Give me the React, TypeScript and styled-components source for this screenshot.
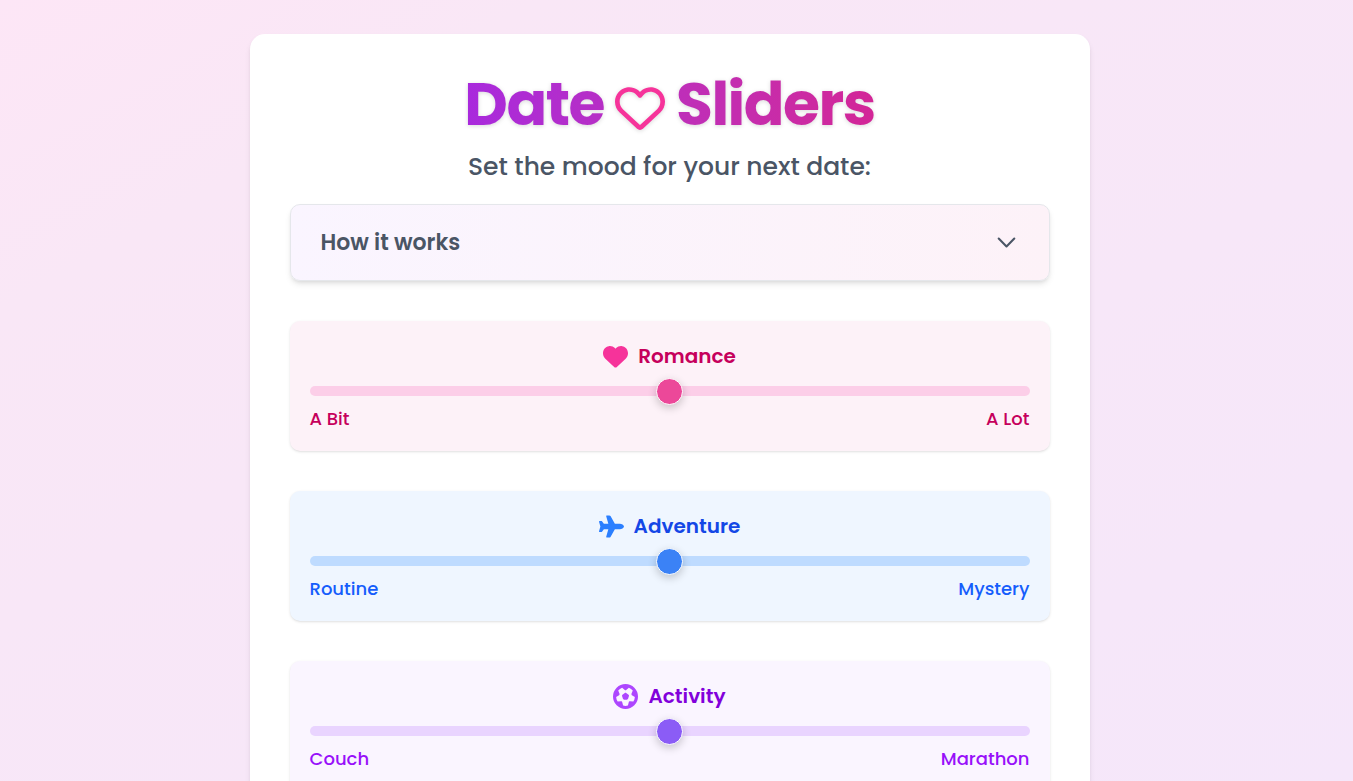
import React, { useState } from "react";
import styled, { createGlobalStyle } from "styled-components";
import { FaFutbol, FaHeart, FaPlane, FaRegHeart } from "react-icons/fa6";

const GlobalStyle = createGlobalStyle`
  *, *::before, *::after { box-sizing: border-box; }
  body {
    margin: 0;
    font-family: Poppins, Inter, "Noto Sans", sans-serif;
    color: #4a5565;
  }
`;

const Page = styled.div`
  min-height: 100vh;
  padding: 34px 34px 40px 20px;
  background: linear-gradient(to bottom right, #fde6f6, #f9e7f6 20%, #f5e7fa) fixed;
`;

const Panel = styled.main`
  max-width: 840px;
  margin: 0 auto;
  padding: 40px;
  background: #fff;
  border-radius: 15px;
  box-shadow: 0 4px 6px -1px rgba(0, 0, 0, 0.1), 0 2px 4px -2px rgba(0, 0, 0, 0.1);
`;

const Title = styled.h1`
  display: flex;
  align-items: center;
  justify-content: center;
  gap: 11px;
  margin: 0;
  font-size: 60px;
  line-height: 60px;
  font-weight: 700;
  letter-spacing: -0.025em;
  color: transparent;
  background: linear-gradient(to right in oklab, #9810fa, #e60076);
  background-clip: text;
  -webkit-background-clip: text;
  filter: drop-shadow(0 1px 2px rgba(0, 0, 0, 0.15));

  svg {
    width: 50px;
    height: 50px;
    margin-top: 8px;
    color: #f6339a;
  }
`;

const Subtitle = styled.p`
  margin: 15px 0 20px;
  font-size: 25px;
  line-height: 35px;
  font-weight: 500;
  text-align: center;
`;

const Disclosure = styled.button`
  display: flex;
  align-items: center;
  justify-content: space-between;
  width: 100%;
  padding: 20px 30px;
  border: 1px solid #e5e7eb;
  border-radius: 10px;
  background: linear-gradient(to right, #faf5ff, #fdf2f8);
  box-shadow: 0 4px 6px -1px rgba(0, 0, 0, 0.1), 0 2px 4px -2px rgba(0, 0, 0, 0.1);
  color: inherit;
  font: inherit;
  font-size: 22px;
  line-height: 35px;
  font-weight: 600;
  cursor: pointer;
`;

const Chevron = styled.svg`
  width: 25px;
  height: 25px;
  fill: none;
  stroke: currentColor;
  stroke-width: 2;
`;

const Sliders = styled.div`
  display: flex;
  flex-direction: column;
  gap: 40px;
  margin-top: 40px;
`;

interface Tone {
  $surface: string;
  $title: string;
  $label: string;
  $icon: string;
  $track: string;
  $thumb: string;
}

const Card = styled.section<Tone>`
  --title: ${(p) => p.$title};
  --label: ${(p) => p.$label};
  --icon: ${(p) => p.$icon};
  --track: ${(p) => p.$track};
  --thumb: ${(p) => p.$thumb};
  padding: 20px;
  border-radius: 10px;
  background: ${(p) => p.$surface};
  box-shadow: 0 1px 3px rgba(0, 0, 0, 0.1), 0 1px 2px -1px rgba(0, 0, 0, 0.1);
`;

const CardTitle = styled.label`
  display: flex;
  align-items: center;
  justify-content: center;
  gap: 10px;
  font-size: 20px;
  line-height: 30px;
  font-weight: 600;
  color: var(--title);

  svg {
    width: 25px;
    height: 25px;
    color: var(--icon);
  }
`;

const Range = styled.input`
  appearance: none;
  display: block;
  width: 100%;
  height: 10px;
  margin: 15px 0 10px;
  border-radius: 5px;
  background: var(--track);
  cursor: pointer;

  &::-webkit-slider-thumb {
    appearance: none;
    width: 27px;
    height: 27px;
    border: 1px solid #fff;
    border-radius: 50%;
    background: var(--thumb);
    box-shadow: 0 3px 8px rgba(0, 0, 0, 0.2);
  }
`;

const Ends = styled.div`
  display: flex;
  justify-content: space-between;
  font-size: 18px;
  line-height: 25px;
  font-weight: 500;
  color: var(--label);
`;

const sliders = [
  {
    id: "romance", name: "Romance", low: "A Bit", high: "A Lot", Icon: FaHeart,
    tone: { $surface: "#fdf2f8", $title: "#c6005c", $label: "#c6005c", $icon: "#f6339a", $track: "#fccee8", $thumb: "#ec4899" },
  },
  {
    id: "adventure", name: "Adventure", low: "Routine", high: "Mystery", Icon: FaPlane,
    tone: { $surface: "#eff6ff", $title: "#1447e6", $label: "#155dfc", $icon: "#2b7fff", $track: "#bedbff", $thumb: "#3b82f6" },
  },
  {
    id: "activity", name: "Activity", low: "Couch", high: "Marathon", Icon: FaFutbol,
    tone: { $surface: "#faf5ff", $title: "#8200db", $label: "#9810fa", $icon: "#ad46ff", $track: "#e9d4ff", $thumb: "#8b5cf6" },
  },
];

export default function App() {
  const [values, setValues] = useState<Record<string, number>>({ romance: 50, adventure: 50, activity: 50 });

  return (
    <>
      <GlobalStyle />
      <Page>
        <Panel>
          <Title>
            <span>Date</span>
            <FaRegHeart aria-hidden />
            <span>Sliders</span>
          </Title>
          <Subtitle>Set the mood for your next date:</Subtitle>
          <Disclosure type="button" aria-expanded={false}>
            How it works
            <Chevron viewBox="0 0 24 24" aria-hidden>
              <path d="m19.5 8.25-7.5 7.5-7.5-7.5" strokeLinecap="round" strokeLinejoin="round" />
            </Chevron>
          </Disclosure>
          <Sliders>
            {sliders.map(({ id, name, low, high, Icon, tone }) => (
              <Card key={id} {...tone}>
                <CardTitle htmlFor={id}>
                  <Icon aria-hidden />
                  {name}
                </CardTitle>
                <Range
                  id={id}
                  type="range"
                  min={0}
                  max={100}
                  value={values[id]}
                  onChange={(e) => setValues({ ...values, [id]: Number(e.target.value) })}
                />
                <Ends>
                  <span>{low}</span>
                  <span>{high}</span>
                </Ends>
              </Card>
            ))}
          </Sliders>
        </Panel>
      </Page>
    </>
  );
}
